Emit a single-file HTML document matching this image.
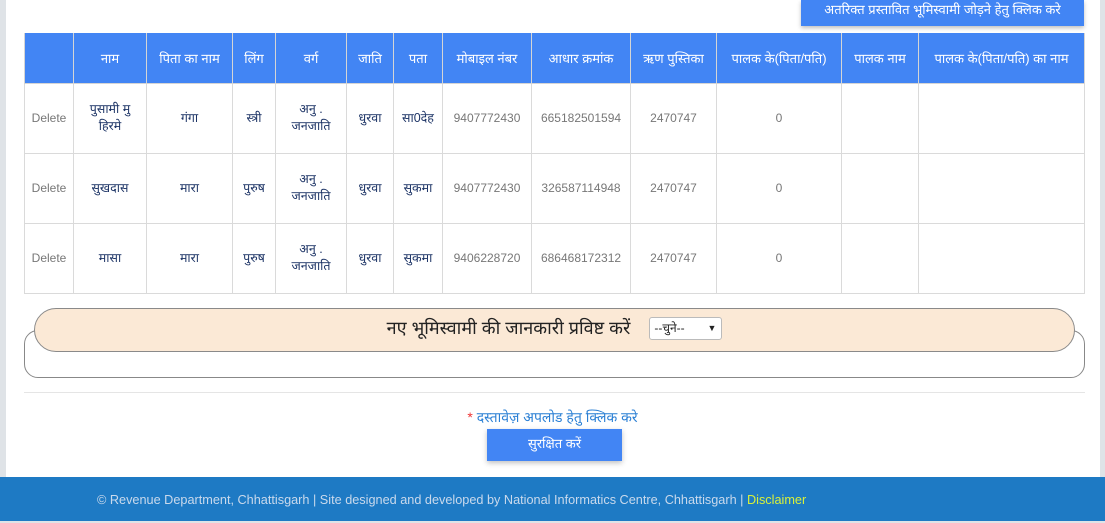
<!DOCTYPE html>
<html><head><meta charset="utf-8"><style>
*{margin:0;padding:0;box-sizing:border-box}
body{width:1105px;height:521px;overflow:hidden;background:#dfe3e7;font-family:"Liberation Sans","Noto Sans CJK SC",sans-serif;position:relative}
.wrap{position:absolute;left:6px;top:0;width:1094px;height:477px;background:#fff}
.topbtn{position:absolute;left:801px;top:0;width:283px;height:26px;background:#4285f4;color:#fff;font-size:13px;text-align:center;line-height:20px;box-shadow:0 2px 4px rgba(0,0,0,.25)}
table{position:absolute;left:24px;top:33px;border-collapse:collapse;table-layout:fixed;width:1061px}
th{background:#4285f4;color:#fff;font-weight:normal;font-size:13px;height:50px;border:1px solid #d5d5d5;border-top:none}
td{height:70px;border:1px solid #dadada;text-align:center;font-size:12.5px;color:#1d3466;line-height:17px}
td.g{color:#777;font-size:12px}
.fs{position:absolute;left:24px;top:330px;width:1061px;height:48px;border:1px solid #888;border-radius:14px}
.lg{position:absolute;left:34px;top:308px;width:1041px;height:44px;background:#fbe9d6;border:1px solid #8a8a8a;border-radius:22px;text-align:center;font-size:18px;color:#222;line-height:38px}
.sel{display:inline-block;vertical-align:middle;width:73px;height:23px;border:1px solid #bbb;border-radius:3px;background:#fff;font-size:12px;line-height:20px;text-align:left;padding-left:4px;margin-left:14px;position:relative;top:-1px}
.hr{position:absolute;left:24px;top:392px;width:1061px;height:1px;background:#e5e5e5}
.up{position:absolute;left:0;width:1105px;top:408px;text-align:center;font-size:14px;color:#2a7fd4}
.sv{position:absolute;left:487px;top:429px;width:135px;height:32px;background:#4285f4;color:#fff;font-size:13px;text-align:center;line-height:30px;box-shadow:0 2px 5px rgba(0,0,0,.25)}
.ft{position:absolute;left:0;top:477px;width:1105px;height:44px;background:#1e7ac4;color:#c9d9ec;font-size:12.7px;line-height:46px;padding-left:97px}
</style></head><body>
<div class="wrap"></div>
<div class="topbtn">अतरिक्त प्रस्तावित भूमिस्वामी जोड़ने हेतु क्लिक करे</div>
<table>
<colgroup><col style="width:49px"><col style="width:73px"><col style="width:86px"><col style="width:43px"><col style="width:71px"><col style="width:47px"><col style="width:49px"><col style="width:89px"><col style="width:99px"><col style="width:86px"><col style="width:125px"><col style="width:77px"><col style="width:166px"></colgroup>
<tr><th></th><th>नाम</th><th>पिता का नाम</th><th>लिंग</th><th>वर्ग</th><th>जाति</th><th>पता</th><th>मोबाइल नंबर</th><th>आधार क्रमांक</th><th>ऋण पुस्तिका</th><th>पालक के(पिता/पति)</th><th>पालक नाम</th><th>पालक के(पिता/पति) का नाम</th></tr>
<tr><td class="g">Delete</td><td>पुसामी मु<br>हिरमे</td><td>गंगा</td><td>स्त्री</td><td>अनु .<br>जनजाति</td><td>धुरवा</td><td>सा0देह</td><td class="g">9407772430</td><td class="g">665182501594</td><td class="g">2470747</td><td class="g">0</td><td></td><td></td></tr>
<tr><td class="g">Delete</td><td>सुखदास</td><td>मारा</td><td>पुरुष</td><td>अनु .<br>जनजाति</td><td>धुरवा</td><td>सुकमा</td><td class="g">9407772430</td><td class="g">326587114948</td><td class="g">2470747</td><td class="g">0</td><td></td><td></td></tr>
<tr><td class="g">Delete</td><td>मासा</td><td>मारा</td><td>पुरुष</td><td>अनु .<br>जनजाति</td><td>धुरवा</td><td>सुकमा</td><td class="g">9406228720</td><td class="g">686468172312</td><td class="g">2470747</td><td class="g">0</td><td></td><td></td></tr>
</table>
<div class="fs"></div>
<div class="lg">नए भूमिस्वामी की जानकारी प्रविष्ट करें <span class="sel">--चुने-- <span style="position:absolute;right:5px;font-size:9px">&#9660;</span></span></div>
<div class="hr"></div>
<div class="up"><span style="color:#e33">*</span> दस्तावेज़ अपलोड हेतु क्लिक करे</div>
<div class="sv">सुरक्षित करें</div>
<div class="ft">© Revenue Department, Chhattisgarh | Site designed and developed by National Informatics Centre, Chhattisgarh | <span style="color:#d8f03a">Disclaimer</span></div>
</body></html>
